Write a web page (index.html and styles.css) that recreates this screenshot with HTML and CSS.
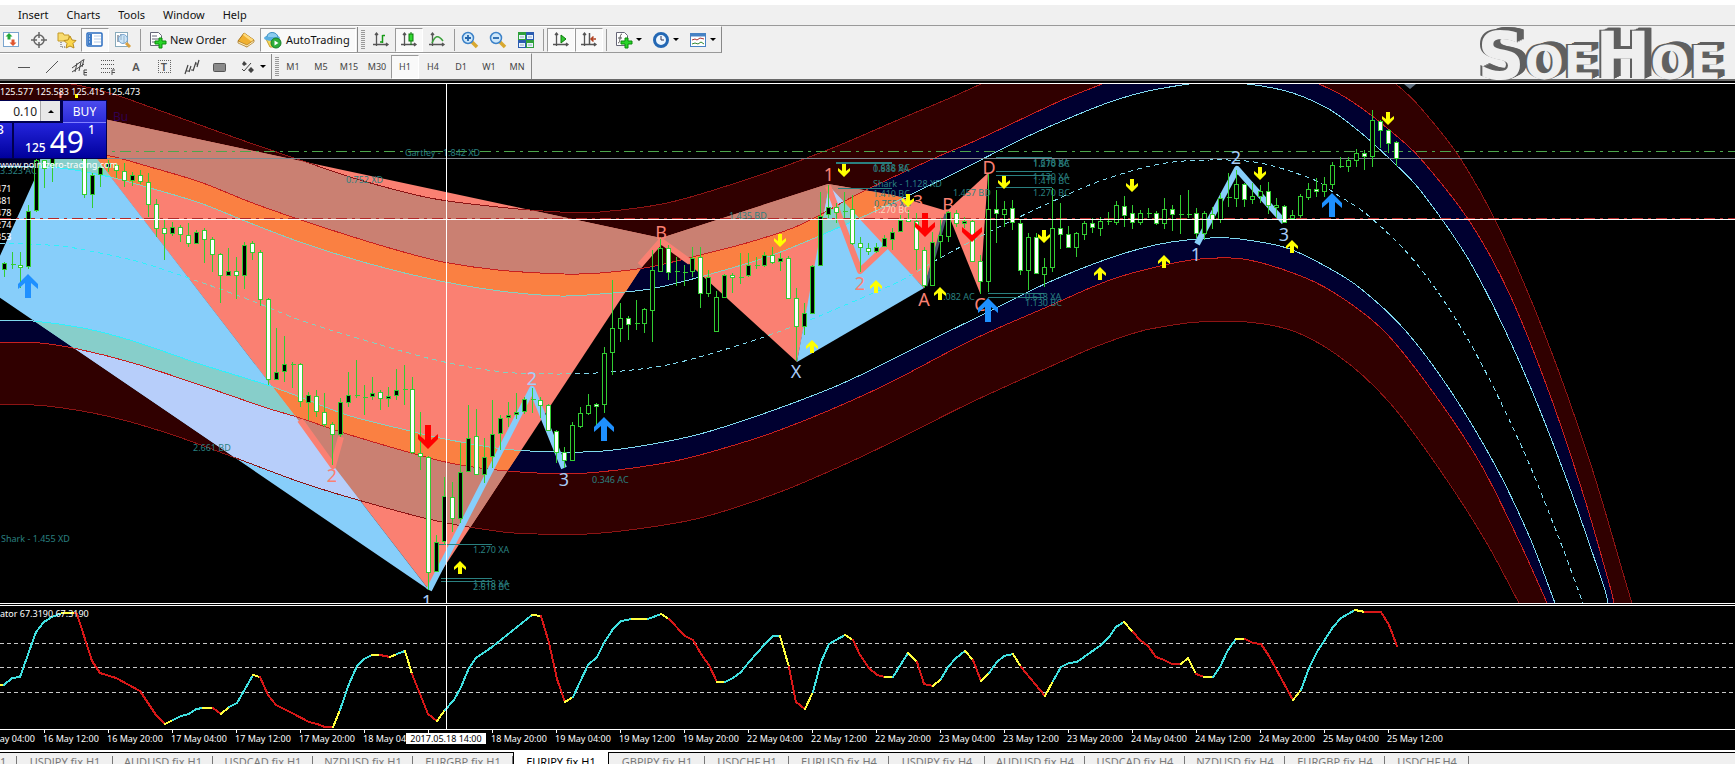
FILE: index.html
```html
<!DOCTYPE html>
<html lang="en">
<head>
<meta charset="utf-8">
<title>EURJPY fix, H1</title>
<link rel="stylesheet" href="styles.css">
</head>
<body>
<header class="header">
  <nav class="menubar">
    <button class="menu">Insert</button>
    <button class="menu">Charts</button>
    <button class="menu">Tools</button>
    <button class="menu">Window</button>
    <button class="menu">Help</button>
  </nav>
  <div class="toolbar toolbar-main">
    <button class="tool" aria-label="Market watch"><svg width="18" height="18"><rect x="1.500" y="1.500" width="15" height="14" fill="#fff" stroke="#7aa5cf"/><path d="M7 2l3.500 3.500H8.500v3h-3v-3H3.500z" fill="#25a83a"/><path d="M11 15l3.500-3.500H12.500v-3h-3v3H7.500z" fill="#e0552e"/></svg></button>
    <button class="tool" aria-label="Data window"><svg width="18" height="18" fill="none" stroke="#666"><circle cx="9" cy="9" r="5" stroke-width="1.500"/><path d="M9 1v6M9 11v6M1 9h6M11 9h6" stroke-width="1.500"/></svg></button>
    <button class="tool" aria-label="Navigator"><svg width="20" height="18"><path d="M1 2h5l1 2h5v6H1z" fill="#f8dc70" stroke="#c49a28"/><path d="M4 11v5h4" fill="none" stroke="#555" stroke-dasharray="1 1"/><path d="M13 5l2 4 4 .5-3 3 1 4.500-4-2-4 2 1-4.500-3-3 4-.5z" fill="#fbd64b" stroke="#b88a1c"/></svg></button>
    <button class="tool pressed" aria-label="Terminal"><svg width="18" height="16"><rect x="1" y="1" width="15" height="13" rx="1" fill="#fff" stroke="#2a6cc0" stroke-width="1.500"/><path d="M2 2h4v11H2z" fill="#3d7bc7"/><path d="M8 4h7M8 7h7M8 10h7" stroke="#b5cce8"/><path d="M3 4h1M3 7h1M3 10h1" stroke="#fff"/></svg></button>
    <button class="tool" aria-label="Strategy tester"><svg width="20" height="18"><rect x="2.500" y="1.500" width="12" height="14" fill="#fff" stroke="#8ab"/><path d="M5 4v7M8 3v6M11 5v7" stroke="#456"/><circle cx="10" cy="8" r="4.500" fill="#b8dcf5" fill-opacity=".7" stroke="#7aa5cf"/><path d="M13 12l4 4" stroke="#d8a040" stroke-width="3"/></svg></button>
    <span class="separator"></span>
    <button class="tool-text"><svg width="18" height="18"><path d="M1.500 1.500h8l3 3v10h-11z" fill="#fff" stroke="#667"/><path d="M3 5h5M3 8h7M3 11h4" stroke="#667"/><path d="M10 7h3v3h4v3h-4v4h-3v-4H6v-3h4z" fill="#28d428" stroke="#0a8a0a"/></svg>New Order</button>
    <button class="tool" aria-label="MetaEditor"><svg width="18" height="16"><path d="M1 9l6-8 10 7-7 7z" fill="#f0b030" stroke="#a8741a"/><path d="M7 1l10 7-2 2L6 3z" fill="#ffd978"/><path d="M1 9l9 4 7-5v2l-7 5-9-4z" fill="#fff0c0" stroke="#a8741a" stroke-width=".7"/></svg></button>
    <button class="tool-text pressed"><svg width="20" height="18"><path d="M3 8h14l-4 8H7z" fill="#f6d95a" stroke="#c8a030"/><ellipse cx="9" cy="7" rx="8" ry="3" fill="#5aaee0"/><path d="M4 6c0-6 10-6 11 0" fill="#8accf0" stroke="#3a8ec0"/><circle cx="13" cy="12" r="5" fill="#2fae3a" stroke="#15802a"/><path d="M11.500 9.500l4 2.500-4 2.500z" fill="#fff"/></svg>AutoTrading</button>
    <span class="edge"></span><span class="grip"></span>
    <button class="tool" aria-label="Bar chart"><svg width="18" height="18"><use href="#axes"/><path d="M8 11h2.500M10.500 4v8M10.500 4.500H13" fill="none" stroke="#169a16" stroke-width="1.500"/></svg></button>
    <button class="tool pressed" aria-label="Candlesticks"><svg width="18" height="18"><use href="#axes"/><path d="M11 1v13" stroke="#0a7a0a"/><rect x="9" y="3" width="4" height="7" fill="#32d832" stroke="#0a7a0a"/></svg></button>
    <button class="tool" aria-label="Line chart"><svg width="18" height="18"><use href="#axes"/><path d="M4 12c3-7 6-9 11-2" fill="none" stroke="#3aa03a" stroke-width="1.500"/></svg></button>
    <span class="separator narrow"></span>
    <button class="tool" aria-label="Zoom in"><svg width="18" height="18"><path d="M11 11l5 5" stroke="#d8a830" stroke-width="3.500"/><circle cx="7" cy="7" r="5.500" fill="#cfe8fa" stroke="#3d82c8" stroke-width="1.500"/><path d="M4 7h6M7 4v6" stroke="#2566ac" stroke-width="1.800"/></svg></button>
    <button class="tool" aria-label="Zoom out"><svg width="18" height="18"><path d="M11 11l5 5" stroke="#d8a830" stroke-width="3.500"/><circle cx="7" cy="7" r="5.500" fill="#cfe8fa" stroke="#3d82c8" stroke-width="1.500"/><path d="M4 7h6" stroke="#2566ac" stroke-width="1.800"/></svg></button>
    <button class="tool" aria-label="Tile windows"><svg width="18" height="18"><path d="M1 1h8v8H1zM9 9h8v8H9z" fill="#2fa03c"/><path d="M9 1h8v8H9zM1 9h8v8H1z" fill="#2a5cb0"/><path d="M2 4h6v4H2zM10 4h6v4h-6zM2 12h6v4H2zM10 12h6v4h-6z" fill="#e8f4ff"/><path d="M3 6h4M11 6h4M3 14h4M11 14h4" stroke="#9ab"/></svg></button>
    <span class="separator"></span>
    <button class="tool pressed" aria-label="Auto scroll"><svg width="18" height="18"><use href="#axes"/><path d="M9 4l5 4-5 4z" fill="#32c832" stroke="#0a7a0a"/></svg></button>
    <button class="tool pressed" aria-label="Chart shift"><svg width="18" height="18"><use href="#axes"/><path d="M9.500 2v11" stroke="#555" stroke-width="1.500"/><path d="M16 8h-5M13.500 5.500L11 8l2.500 2.500" fill="none" stroke="#b04020" stroke-width="1.500"/></svg></button>
    <span class="separator"></span>
    <button class="tool-menu" aria-label="Indicators"><svg width="18" height="18"><path d="M1.500 1.500h8l3 3v10h-11z" fill="#fff" stroke="#667"/><path d="M7 3c-3 0-1 9-4 9M3 7h4" fill="none" stroke="#555"/><path d="M10 7h3v3h4v3h-4v4h-3v-4H6v-3h4z" fill="#28d428" stroke="#0a8a0a"/></svg><i class="caret"></i></button>
    <button class="tool-menu" aria-label="Periods"><svg width="18" height="18"><circle cx="9" cy="9" r="6.500" fill="#eef7ff" stroke="#2468b4" stroke-width="3"/><path d="M9 5v4h3" fill="none" stroke="#335"/></svg><i class="caret"></i></button>
    <button class="tool-menu" aria-label="Templates"><svg width="18" height="18"><rect x="1.500" y="2.500" width="15" height="13" fill="#fff" stroke="#4682c4"/><path d="M2 4h14" stroke="#4682c4" stroke-width="3"/><path d="M3 9l3-1 2 1 3-2 4 1" fill="none" stroke="#a33"/><path d="M3 13l3-1 3 1 3-2 3 2" fill="none" stroke="#383"/></svg><i class="caret"></i></button>
  </div>
  <div class="toolbar toolbar-draw">
    <button class="tool" aria-label="Horizontal line"><svg width="18" height="18"><path d="M3 9.500h12" stroke="#555"/></svg></button>
    <button class="tool" aria-label="Trend line"><svg width="18" height="18"><path d="M3 15L15 3" stroke="#555"/></svg></button>
    <button class="tool" aria-label="Channel"><svg width="18" height="18" fill="none" stroke="#444"><path d="M1 10L12 2M1 14L13 6M4 14l2-9M8 13l2-9M11 9l2-8"/><path d="M16 12h-3v5h3M13 14.500h3"/></svg></button>
    <button class="tool" aria-label="Fibonacci"><svg width="18" height="18" fill="none" stroke="#555"><path d="M2 2.500h14M2 6.500h14M2 10.500h14M2 14.500h9" stroke-dasharray="1 1"/><path d="M16 12h-3v5M13 14.500h3"/></svg></button>
    <button class="tool letter" aria-label="Text">A</button>
    <button class="tool letter" aria-label="Text label"><span class="label-box">T</span></button>
    <button class="tool" aria-label="Cycle lines"><svg width="18" height="18" fill="none" stroke="#444" stroke-width="1.200"><path d="M2 16l3-9M3 13h4M6 14l2-6M8 12h3M10 13l3-9M12 6h3M14 9l2-7"/></svg></button>
    <button class="tool" aria-label="Rectangle"><svg width="18" height="18"><rect x="2.500" y="5.500" width="12" height="8" rx="1" fill="#8a8a8a" stroke="#555"/></svg></button>
    <button class="tool-menu" aria-label="Arrows"><svg width="18" height="18" fill="#444"><path d="M5 3l3 3-3 2-2-2zM12 9l3 3-3 3-3-3z"/><path d="M3 11l2 2 7-8" fill="none" stroke="#444"/></svg><i class="caret"></i></button>
    <span class="edge"></span><span class="grip"></span>
    <button class="tool period">M1</button>
    <button class="tool period">M5</button>
    <button class="tool period">M15</button>
    <button class="tool period">M30</button>
    <button class="tool period pressed">H1</button>
    <button class="tool period">H4</button>
    <button class="tool period">D1</button>
    <button class="tool period">W1</button>
    <button class="tool period">MN</button>
  </div>
  <div class="logo">SoeHoe</div>
  <svg class="defs" width="0" height="0"><defs><g id="axes" fill="none" stroke="#555" stroke-width="1.300"><path d="M4.500 2v13M1 13.500h15M3 4l1.500-2L6 4M14 12l2 1.500-2 1.500"/></g></defs></svg>
</header>

<main class="workspace">
  <section class="pane price-pane">
    <svg class="plot" id="price"></svg>
    <p class="ohlc">125.577 125.583 125.415 125.473</p>
    <div class="trade">
      <div class="trade-top">
        <input class="volume" aria-label="Volume" value="0.10">
        <button class="spin" aria-label="Increase volume"><i class="caret up"></i></button>
        <button class="buy">BUY</button>
      </div>
      <div class="trade-bottom">
        <div class="quote sell"><sup>3</sup></div>
        <div class="quote"><span class="minor">125</span><span class="major">49</span><sup>1</sup></div>
      </div>
    </div>
    <div class="notes">
      <p class="site">www.pointzero-trading.com</p>
      <ul class="readings"><li>471</li><li>881</li><li>478</li><li>274</li><li>353</li></ul>
    </div>
  </section>
  <section class="pane osc-pane">
    <svg class="plot" id="osc"></svg>
    <p class="ohlc">ator 67.3190 67.3190</p>
  </section>
  <div class="axis" id="axis"><span class="cursor-time">2017.05.18 14:00</span></div>
</main>

<nav class="tabs">
  <button class="tab first">1</button>
  <button class="tab mid">USDJPY fix,H1</button>
  <button class="tab">AUDUSD fix,H1</button>
  <button class="tab">USDCAD fix,H1</button>
  <button class="tab">NZDUSD fix,H1</button>
  <button class="tab">EURGBP fix,H1</button>
  <button class="tab mid active">EURJPY fix,H1</button>
  <button class="tab mid">GBPJPY fix,H1</button>
  <button class="tab short">USDCHF,H1</button>
  <button class="tab">EURUSD fix,H4</button>
  <button class="tab mid">USDJPY fix,H4</button>
  <button class="tab">AUDUSD fix,H4</button>
  <button class="tab">USDCAD fix,H4</button>
  <button class="tab">NZDUSD fix,H4</button>
  <button class="tab">EURGBP fix,H4</button>
  <button class="tab short">USDCHF,H4</button>
</nav>
<script src="chart.js"></script>
</body>
</html>
```

FILE: styles.css
```css
* { box-sizing: border-box; }
body {
  margin: 0;
  height: 100vh;
  display: flex;
  flex-direction: column;
  overflow: hidden;
  background: #f0f0f0;
  color: #111;
  font-family: "Noto Sans", "Open Sans", sans-serif;
  font-size: 11px;
}
p, ul { margin: 0; padding: 0; list-style: none; }
button { border: 0; background: none; padding: 0; margin: 0; font: inherit; color: inherit; }
.header { position: relative; border-top: 5px solid #fff; border-bottom: 2px solid #696969; }
.menubar { display: flex; gap: 18px; height: 21px; padding-left: 18px; border-bottom: 1px solid #999; }
.menu { line-height: 20px; }
.toolbar { display: flex; align-items: center; width: max-content; border-top: 1px solid #fff; border-right: 1px solid #888; }
.toolbar-main { height: 27px; margin-left: -3px; border-bottom: 1px solid #999; }
.toolbar-draw { height: 26px; padding-left: 10px; }
.tool { width: 28px; height: 24px; display: flex; align-items: center; justify-content: center; }
.tool-text { display: flex; align-items: center; gap: 3px; height: 24px; width: 88px; padding-left: 5px; white-space: nowrap; }
.tool-text.pressed { width: 96px; padding-left: 2px; }
.tool-menu { display: flex; align-items: center; gap: 3px; width: 37px; height: 24px; padding-left: 5px; }
.pressed { background: #f9f9f9; border: 1px solid #fff; border-top-color: #999; border-left-color: #999; }
.separator { width: 7px; height: 22px; background: linear-gradient(#999, #999) 3px 0 / 1px 100% no-repeat; }
.separator.narrow { width: 5px; }
.edge { width: 2px; align-self: stretch; border-right: 1px solid #888; }
.grip { width: 4px; height: 20px; margin: 0 2px 0 3px; background: repeating-linear-gradient(#999 0 1px, #f0f0f0 1px 2px); }
.toolbar-draw .edge { width: 1px; }
.toolbar-draw .grip { margin: 0 0 0 3px; }
.caret { width: 0; height: 0; border: 3px solid transparent; border-top-color: #000; border-bottom: 0; }
.caret.up { border: 3px solid transparent; border-bottom-color: #000; border-top: 0; }
.letter { font-weight: 600; color: #555; }
.label-box { width: 13px; height: 13px; line-height: 12px; border: 1px dotted #666; }
.period { font-size: 9px; color: #444; }
.logo {
  position: absolute;
  right: 14px;
  bottom: -3px;
  font: 700 66px/50px "DejaVu Sans", sans-serif;
  font-variant: small-caps;
  color: #efefef;
  text-shadow: -2px -1px #606060, 1px 0 #606060, 2px -1px #606060, 3px -1px #606060, 4px -2px #606060, 5px -2px #606060, 6px -3px #606060, 7px -3px #606060;
}
.defs { position: absolute; }

.workspace { flex: 1; min-height: 0; display: flex; flex-direction: column; background: #000; border-top: 2px solid #000; color: #fff; font-size: 9px; }
.pane { position: relative; overflow: hidden; border-top: 1px solid #fff; border-bottom: 1px solid #fff; }
.price-pane { flex: 1; min-height: 0; margin-bottom: 1px; }
.osc-pane { height: 125px; }
.plot { position: absolute; inset: 0; width: 100%; height: 100%; }
.ohlc { position: relative; line-height: 15px; white-space: pre; }
.trade { position: relative; width: 107px; margin-top: 1px; background: #000050; padding: 1px; padding-left: 0; }
.trade-top { display: flex; height: 22px; }
.volume { width: 40px; height: 20px; border: 0; padding: 0 3px 0 0; text-align: right; font: 12px "Noto Sans", sans-serif; color: #222; background: #fff; }
.spin { width: 20px; height: 20px; background: #e8e8e8; border-left: 1px solid #aaa; display: flex; align-items: center; justify-content: center; }
.buy { flex: 1; margin-left: 3px; height: 22px; color: #fff; font-size: 12px; background: linear-gradient(#4a4aee, #2c2cd8); border-bottom: 1px solid #8080ff; }
.trade-bottom { display: flex; gap: 2px; height: 35px; }
.quote { flex: 1; display: flex; align-items: flex-end; justify-content: center; gap: 4px; color: #fff; background: linear-gradient(#2424dc, #00009c); }
.quote.sell { flex: none; width: 12px; justify-content: flex-start; text-indent: -3px; }
.minor { font-size: 12px; line-height: 20px; font-weight: 500; }
.major { font-size: 30px; line-height: 33px; }
.quote sup { font-size: 12px; line-height: 14px; font-weight: 500; align-self: flex-start; }
.notes { position: relative; }
.site { line-height: 12px; }
.readings { margin-top: 12px; line-height: 12px; margin-left: -4px; }
.axis { position: relative; display: flex; height: 20px; line-height: 18px; padding-left: 43px; white-space: nowrap; }
.date { flex: none; width: 64px; background: linear-gradient(#fff, #fff) 1px 0 / 1px 3px no-repeat; }
.date.start { margin-left: -64px; }
.cursor-time { position: absolute; left: 406px; top: 3px; width: 80px; line-height: 11px; text-align: center; background: #fff; color: #000; z-index: 1; }

.tabs { display: flex; height: 14px; overflow: hidden; border-top: 2px solid #fff; color: #777; box-shadow: inset 0 1px #000; }
.tab { flex: none; width: 100px; height: 18px; line-height: 17px; text-align: center; background: linear-gradient(#777, #777) right 4px / 1px 12px no-repeat; }
.tab.first { width: 17px; text-align: left; }
.tab.mid { width: 96px; }
.tab.short { width: 84px; }
.tab.active { background: #fff; color: #000; border-left: 1px solid #000; border-right: 1px solid #000; }

.maroon { fill: #300000; }
.navy { fill: #000030; }
.on-salmon .maroon { fill: #ca8072; }
.on-salmon .navy { fill: #fa8042; }
.on-sky .maroon { fill: #b7cefa; }
.on-sky .navy { fill: #87ceca; }
.salmon { fill: #fa8072; }
.sky { fill: #87cefa; }
.curves { fill: none; shape-rendering: crispEdges; }
.curve-red { stroke: #c82020; }
.curve-outer { stroke: #8c1414; }
.curve-sky { stroke: #7fd8ee; }
.on-salmon .curve-sky { stroke: #87cfbe; }
.on-sky .curve-sky { stroke: #30f0fa; }
.dashed { stroke-dasharray: 5 4; }
.thick { fill: none; stroke-width: 6; stroke-linejoin: round; }
.thick.of-sky { stroke: #87cefa; }
.thick.of-salmon { stroke: #fa8072; }
.candle { stroke: #32cd32; shape-rendering: crispEdges; }
.bull { fill: #000; }
.bear { fill: #fff; }
.label { fill: #2a8080; font-size: 9px; }
.label.pale { fill: #f8d8c0; }
.label.dim { fill: #300050; font-size: 12px; }
.mark { font-size: 18px; text-anchor: middle; }
.mark.of-salmon { fill: #fa8072; }
.mark.of-sky { fill: #a8ccf8; }
.yellow { fill: #ffff00; }
.blue { fill: #1e90ff; }
.red { fill: #ff0000; }
.rule { shape-rendering: crispEdges; fill: none; }
.osc { fill: none; stroke-width: 2; stroke-linecap: round; shape-rendering: crispEdges; }
.osc-c { stroke: #40e0e0; }
.osc-r { stroke: #d81818; }
.osc-y { stroke: #ffff40; }
```

FILE: chart.js
```js
const FAR = 4000;

// Channel curves, as x,y pairs through which a smooth line is drawn.
const curves = {
  outerTop: [0,83, 50,82, 77,85, 110,93, 150,107, 200,125, 250,143, 300,160, 360,180, 430,198, 498,207, 560,212, 600,212, 667,203, 733,184, 780,168, 830,149, 852,140, 900,119, 950,98, 990,80, 1060,50, 1150,24, 1220,18, 1290,26, 1340,46, 1375,68, 1403,90, 1420,107, 1460,158, 1500,230, 1545,335, 1590,462, 1628,590, 1632,603],
  redTop: [0,149, 60,149, 110,156, 150,167, 200,182, 250,202, 295,218, 350,236, 400,251, 443,262, 498,270, 564,274, 600,273, 650,267, 700,255, 750,242, 800,225, 860,193, 937,157, 977,140, 1060,101, 1087,90, 1130,74, 1180,63, 1230,60, 1280,69, 1332,90, 1360,107, 1393,133, 1420,158, 1470,222, 1510,295, 1550,395, 1585,500, 1611,590, 1614,603],
  skyTop: [0,166, 60,168, 110,177, 150,188, 200,203, 250,223, 300,242, 370,264, 440,281, 500,291, 560,296, 600,294, 650,289, 700,277, 767,257, 817,237, 893,203, 967,167, 1020,140, 1060,122, 1110,102, 1153,90, 1215,82, 1282,90, 1327,108, 1360,132, 1393,162, 1420,190, 1470,262, 1520,363, 1565,475, 1605,590, 1608,603],
  middle: [0,243, 60,246, 100,253, 143,263, 200,282, 250,300, 300,320, 367,341, 440,361, 503,372, 560,374, 610,372, 667,365, 733,347, 797,325, 850,303, 900,281, 940,258, 993,230, 1060,198, 1103,180, 1160,164, 1210,160, 1260,163, 1317,181, 1333,192, 1370,217, 1420,268, 1470,343, 1520,443, 1555,528, 1583,603],
  skyLow: [0,321, 33,321, 83,328, 133,341, 200,364, 267,385, 300,397, 347,415, 410,431, 440,438, 503,449, 560,452, 603,451, 653,444, 700,434, 760,415, 827,390, 867,372, 933,339, 980,316, 1047,283, 1110,258, 1160,244, 1210,238, 1240,239, 1287,248, 1327,267, 1360,288, 1405,330, 1450,390, 1495,465, 1530,538, 1555,603],
  redLow: [0,342, 40,343, 78,349, 133,363, 200,385, 267,408, 300,418, 347,434, 437,460, 480,468, 537,473, 587,473, 653,465, 700,455, 780,430, 877,389, 972,340, 1047,307, 1110,280, 1160,266, 1200,259, 1243,259, 1293,273, 1333,292, 1383,330, 1430,388, 1480,463, 1520,543, 1547,603],
  outerLow: [0,404, 47,406, 107,416, 167,433, 233,457, 300,482, 358,500, 437,521, 503,532, 537,534, 587,534, 637,529, 700,518, 780,492, 850,462, 900,438, 972,402, 1047,368, 1100,345, 1150,329, 1220,321, 1287,329, 1340,357, 1390,403, 1440,470, 1485,540, 1519,603],
};

const salmon = [
  [85,115, 661,238, 429,590, 95,157],
  [661,238, 828,184, 893,195, 947,211, 924,288, 830,192, 797,362],
  [947,211, 988,173, 980,293],
];
const sky = [
  [-1,258, 36,176, 48,130, 97,159, 429,590, -1,297],
  [797,362, 829,186, 924,288],
];

// [kind, high, body top, body bottom, low]; u = bull, d = bear, one bar every 8px.
const bars = [
  ['u',262,263,269,277],['u',252,264,264,269],['d',252,265,267,288],['u',205,211,266,269],['u',158,160,210,212],['d',160,160,168,188],['u',158,158,163,182],['d',140,145,150,155],['u',140,145,150,155],['d',140,145,150,155],
  ['d',158,158,194,198],['u',173,175,194,208],['u',165,167,174,187],['u',160,163,167,172],['d',163,165,170,178],['d',163,171,180,187],['u',172,175,180,186],['d',170,175,181,184],['d',173,182,204,217],['d',199,204,228,237],
  ['d',220,228,233,260],['u',222,227,233,236],['d',225,227,234,242],['d',223,235,243,247],['u',230,232,243,244],['d',228,230,239,263],['d',237,239,254,272],['d',253,254,275,303],['u',248,271,275,276],['d',257,271,275,299],
  ['u',242,245,275,289],['d',241,243,252,260],['d',250,252,299,306],['d',298,299,379,385],['u',328,372,379,380],['u',336,364,371,382],['u',362,364,364,388],['d',363,364,401,407],['u',392,395,402,420],['d',390,396,411,417],
  ['d',393,412,424,427],['d',422,424,434,465],['u',398,402,434,437],['u',372,395,402,407],['u',360,395,395,398],['u',385,397,397,415],['u',377,393,396,400],['d',390,392,398,410],['u',387,396,398,407],['u',369,390,395,400],
  ['u',365,389,389,405],['d',377,389,452,454],['d',412,453,456,470],['d',456,457,572,590],['u',535,542,571,572],['u',477,496,541,545],['d',482,497,518,532],['u',443,472,518,523],['u',405,438,471,472],['d',409,436,474,475],
  ['u',438,457,474,483],['u',400,434,456,468],['u',415,418,433,450],['u',402,415,417,427],['u',393,412,414,419],['u',397,399,411,414],['u',388,399,399,413],['d',397,400,405,418],['d',404,405,430,431],['d',430,431,452,463],
  ['d',447,452,460,468],['u',422,425,460,461],['u',407,413,426,428],['u',394,405,413,415],['d',403,404,406,425],['u',347,353,404,413],['u',280,328,352,375],['u',303,318,328,342],['d',316,318,324,340],['u',300,323,323,330],
  ['u',308,309,323,333],['u',250,270,310,342],['u',237,248,271,272],['d',245,248,272,280],['u',257,271,271,286],['u',265,272,272,286],['u',247,258,271,277],['d',247,257,293,308],['u',270,277,293,297],['u',291,297,331,332],
  ['u',274,275,297,297],['d',273,275,277,293],['u',253,277,277,284],['u',253,265,275,277],['u',257,265,265,269],['u',252,255,265,267],['d',247,255,262,264],['u',253,258,261,271],['d',256,258,298,299],['d',288,298,326,361],
  ['u',303,313,326,335],['u',265,266,313,314],['u',192,216,265,266],['u',185,207,214,218],['d',203,207,212,223],['u',192,211,211,218],['d',195,209,243,245],['d',237,243,247,272],['d',243,248,251,255],['u',243,247,251,253],
  ['u',235,238,246,247],['u',228,232,239,250],['u',215,220,231,232],['d',210,219,221,222],['d',213,221,249,270],['d',247,250,285,288],['u',232,242,285,285],['u',218,235,241,258],['u',210,212,236,242],['d',210,213,223,227],
  ['u',217,221,223,228],['d',220,221,261,262],['d',255,261,281,294],['u',173,209,281,292],['d',190,209,213,243],['u',201,209,214,227],['d',200,208,222,230],['d',219,223,270,275],['u',233,237,270,290],['d',233,237,273,274],
  ['u',258,267,274,287],['u',188,228,267,272],['d',203,228,234,249],['d',226,234,247,248],['u',232,233,247,257],['u',221,223,234,240],['d',218,223,227,233],['u',217,221,228,236],['u',212,221,221,225],['u',201,205,222,225],
  ['d',196,206,215,227],['d',205,213,222,229],['u',210,213,222,225],['u',208,213,213,218],['d',211,213,223,225],['u',198,209,223,229],['d',205,209,214,231],['u',195,214,214,234],['u',190,214,214,218],['d',208,213,233,238],
  ['u',211,213,233,240],['d',207,214,219,229],['u',193,198,219,223],['u',173,197,197,207],['u',170,184,198,207],['d',183,184,199,207],['u',183,196,199,204],['u',185,191,196,203],['d',182,191,205,214],['u',198,205,207,218],
  ['d',205,206,222,223],['u',210,215,218,220],['u',194,196,215,218],['u',183,189,197,200],['d',178,189,191,197],['u',177,184,191,197],['u',162,165,184,189],['u',157,166,166,168],['u',157,160,166,172],['u',149,153,160,167],
  ['d',150,153,156,170],['u',110,120,156,167],['d',120,121,130,148],['d',129,130,143,153],['d',141,142,158,166],
];

const labels = [
  [405,156,'Gartley - 1.842 XD'],[346,183,'0.752 XD'],[729,219,'1.435 BD'],[193,451,'2.661 BD'],[1,542,'Shark - 1.455 XD'],
  [473,553,'1.270 XA'],[473,587,'1.618 XA'],[473,590,'2.618 BC'],[592,483,'0.346 AC'],[938,300,'1.082 AC'],
  [1025,300,'0.618 XA'],[1025,306,'1.130 BC'],[873,171,'1.618 BC'],[873,172,'0.886 XA'],[873,187,'Shark - 1.128 XD'],
  [873,197,'1.410 BC'],[874,207,'0.755 XD'],[953,196,'1.457 BD'],[1033,166,'1.618 XA'],[1033,167,'1.270 BC'],
  [1033,180,'1.130 XA'],[1033,184,'1.410 BC'],[1033,196,'1.270 BC'],[0,174,'3.323 AC'],
  [873,213,'1.270 BC','pale'],[113,121,'Bu','dim'],
];
const levels = [
  [439,492,544],[441,492,578],[441,492,581],[988,1044,293],[988,1044,297],[836,892,162],[836,892,163],[838,892,188],
  [996,1052,157],[996,1052,171],[996,1052,175],[996,1052,187],
];
const marks = [
  [661,239,'B','salmon'],[829,181,'1','salmon'],[860,290,'2','salmon'],[918,208,'3','salmon'],[924,306,'A','salmon'],[948,211,'B','salmon'],
  [989,174,'D','salmon'],[980,311,'C','salmon'],[332,482,'2','salmon'],[796,378,'X','sky'],[532,385,'2','sky'],[564,486,'3','sky'],
  [427,608,'1','sky'],[1236,164,'2','sky'],[1196,261,'1','sky'],[1284,241,'3','sky'],
];
const thick = [
  ['salmon','300,420 333,466 341,437'],['salmon','828,186 860,271 912,222'],['salmon','640,265 661,241 690,262'],
  ['sky','429,590 532,389 564,468'],['sky','1197,244 1237,169 1284,222'],
];
const signals = [
  ['blue','up',28,274],['blue','up',604,417],['blue','up',988,298],['blue','up',1332,193],
  ['red','down',428,425],['red','down',925,213],['red','head',972,218],
  ['yellow','down',780,234],['yellow','down',844,164],['yellow','down',908,194],['yellow','down',1004,176],['yellow','down',1044,230],
  ['yellow','down',1132,179],['yellow','down',1260,167],['yellow','down',1388,112],
  ['yellow','up',460,561],['yellow','up',812,340],['yellow','up',876,280],['yellow','up',940,287],['yellow','up',1100,267],
  ['yellow','up',1164,255],['yellow','up',1292,240],
];

// Oscillator: each run is a colour and the points that it ends on.
const runs = [
  ['y',0,685,4,685],['c',12,678,20,677,36,632,44,622,52,617,62,613],['y',70,613,75,613],['r',77,614,92,661,100,673,116,678,140,691,156,715,165,724],
  ['y',173,720],['c',181,716,189,714,196,709,203,708],['y',213,708],['r',221,714],['y',229,707],['c',237,703,253,675],['y',260,677],
  ['r',268,695,276,705,292,713,309,722,317,724,325,727,333,727],['y',340,710],['c',349,684,357,666,364,659,372,655],['y',380,655],['r',390,657],['y',397,654],['c',405,651],
  ['y',412,674],['r',428,714,437,721],['y',445,710],['c',454,700,461,687,469,668,476,658,492,647,532,615],['y',541,616],['r',549,643,557,679,565,702],['y',573,697],
  ['c',588,665,597,657,604,643,613,629,621,621,632,619],['y',648,619],['c',661,614],['y',669,619],['r',685,636,693,640,701,654,709,665,717,682],['y',725,682],
  ['c',733,678,741,672,749,662,765,644,773,636,780,636],['y',789,667],['r',796,702,805,709],['y',813,692],['c',821,662,829,644,845,635],['y',853,640],
  ['r',860,655,869,668,877,675,885,677],['y',893,677],['c',908,653],['y',917,662],['r',924,684,933,686],['y',941,679],['c',948,667,956,658,965,651],['y',973,660],['r',981,681],
  ['y',989,673],['c',997,662,1004,656,1013,654],['y',1021,667],['r',1045,696],['y',1053,681],['c',1061,667,1069,663,1077,662,1101,645,1109,637,1116,627,1124,622],['y',1133,632],
  ['r',1140,640,1148,646,1156,657,1164,660,1172,664,1181,664],['y',1188,658,1196,674],['r',1204,677],['y',1213,677],['c',1220,667,1228,650,1236,639],['y',1245,639],
  ['r',1253,643,1261,644,1269,656,1293,700],['y',1301,690],['c',1309,668,1317,652,1333,627,1341,618,1355,610],['y',1365,612],['r',1381,612,1389,625,1397,646],
];

const dates = ['16 May 12:00','16 May 20:00','17 May 04:00','17 May 12:00','17 May 20:00','18 May 04:00','18 May 12:00','18 May 20:00','19 May 04:00','19 May 12:00','19 May 20:00','22 May 04:00','22 May 12:00','22 May 20:00','23 May 04:00','23 May 12:00','23 May 20:00','24 May 04:00','24 May 12:00','24 May 20:00','25 May 04:00','25 May 12:00'];

const pairs = a => a.reduce((r, v, i) => (i % 2 ? r[r.length - 1].push(v) : r.push([v]), r), []);

function smooth(points) {
  let d = `${points[0][0]},${points[0][1]}`;
  for (let i = 0; i < points.length - 1; i++) {
    const a = points[i - 1] || points[i], b = points[i], c = points[i + 1], e = points[i + 2] || c;
    const k = (c[0] - b[0]) / 3;
    const s1 = (c[1] - a[1]) / (c[0] - a[0]), s2 = (e[1] - b[1]) / (e[0] - b[0]);
    d += ` C${b[0] + k},${b[1] + k * s1} ${c[0] - k},${c[1] - k * s2} ${c[0]},${c[1]}`;
  }
  return d;
}
const line = name => 'M' + smooth(pairs(curves[name]));

// Each area runs down past the pane, so a band is the even-odd difference of two areas.
function band(upper, lower, cls) {
  const area = name => `M-5,900 L-5,${curves[name][1]} L${smooth(pairs(curves[name]))} L${curves[name][curves[name].length - 2]},900 Z`;
  return `<path class="${cls}" fill-rule="evenodd" d="${area(upper)} ${area(lower)}"/>`;
}

const bands = band('outerTop', 'redTop', 'maroon') + band('redTop', 'skyTop', 'navy') + band('skyLow', 'redLow', 'navy') + band('redLow', 'outerLow', 'maroon');
const strokes = `<g class="curves">
  <path class="curve-outer" d="${line('outerTop')}"/><path class="curve-outer" d="${line('outerLow')}"/>
  <path class="curve-red" d="${line('redTop')}"/><path class="curve-red" d="${line('redLow')}"/>
  <path class="curve-sky" d="${line('skyTop')}"/><path class="curve-sky" d="${line('skyLow')}"/>
  <path class="curve-sky dashed" d="${line('middle')}"/></g>`;
const shapes = (list, cls) => list.map(p => `<polygon class="${cls}" points="${p.join(' ')}"/>`).join('');
const rule = (y, stroke, dash) => `<path class="rule" d="M0,${y}.5H${FAR}" stroke="${stroke}" stroke-dasharray="${dash || 'none'}"/>`;

function candle([kind, high, top, bottom, low], i) {
  const x = 4.5 + 8 * i;
  const body = bottom - top < 1
    ? `<path d="M${x - 2},${top + .5}h5"/>`
    : `<rect class="${kind === 'u' ? 'bull' : 'bear'}" x="${x - 2}" y="${top + .5}" width="4" height="${bottom - top}"/>`;
  return `<path d="M${x},${high}V${low}"/>${body}`;
}

function signal([color, dir, x, y]) {
  const big = color !== 'yellow';
  let d = big ? 'M0,0L10,10V15L3,9V24H-3V9L-10,15V10Z' : 'M0,0L6,6V9L2,6V13H-2V6L-6,9V6Z';
  if (dir === 'head') d = 'M0,0L10,10V15L0,7L-10,15V10Z';
  const flip = dir === 'up' ? '' : ` translate(0 ${big ? 24 : 13}) scale(1 -1)`;
  return `<path class="${color}" transform="translate(${x} ${y})${flip}" d="${d}"/>`;
}

document.getElementById('price').innerHTML = `
<defs><clipPath id="in-salmon">${shapes(salmon, '')}</clipPath><clipPath id="in-sky">${shapes(sky, '')}</clipPath></defs>
<g transform="translate(0 -84)">
  ${bands}${strokes}
  ${shapes(salmon, 'salmon')}<g class="on-salmon" clip-path="url(#in-salmon)">${bands}${strokes}</g>
  ${shapes(sky, 'sky')}<g class="on-sky" clip-path="url(#in-sky)">${bands}${strokes}</g>
  ${rule(151, '#4ca64c', '11 5 3 5')}${rule(158, '#808890')}${rule(218, '#b42828', '11 5 3 5')}
  ${thick.map(([c, p]) => `<polyline class="thick of-${c}" points="${p}"/>`).join('')}
  <path d="M926,286L946,214" stroke="#505870" stroke-width="3"/>
  ${levels.map(([a, b, y]) => `<path class="rule" d="M${a},${y}.5H${b}" stroke="#2a8080"/>`).join('')}
  <g class="candle">${bars.map(candle).join('')}</g>
  ${marks.map(([x, y, t, c]) => `<text class="mark of-${c}" x="${x}" y="${y}">${t}</text>`).join('')}
  ${labels.map(([x, y, t, c]) => `<text class="label ${c || ''}" x="${x}" y="${y}">${t}</text>`).join('')}
  ${signals.map(signal).join('')}
  <path d="M60.5,92V98" stroke="#fa8072" stroke-width="2"/><path d="M76.5,94V98" stroke="#ffff00" stroke-width="3"/>
  <path d="M1404,84h12l-6,5z" fill="#607080"/>
  ${rule(219, '#fff')}
  <path class="rule" d="M446.5,84V900" stroke="#fff"/>
</g>`;

let from = [0, 685];
const oscillator = runs.map(([c, ...pts]) => {
  const list = [from, ...pairs(pts)];
  from = list[list.length - 1];
  return `<polyline class="osc osc-${c}" points="${list.join(' ')}"/>`;
}).join('');
document.getElementById('osc').innerHTML = `<g transform="translate(0 -606)">
  ${[643, 667, 692].map(y => rule(y, '#c8c8c8', '4 3')).join('')}${oscillator}
  <path class="rule" d="M446.5,600V900" stroke="#fff"/></g>`;

const axis = document.getElementById('axis');
['16 May 04:00', ...dates].forEach((text, i) => {
  const item = document.createElement('span');
  item.className = i ? 'date' : 'date start';
  item.textContent = text;
  axis.append(item);
});
```
